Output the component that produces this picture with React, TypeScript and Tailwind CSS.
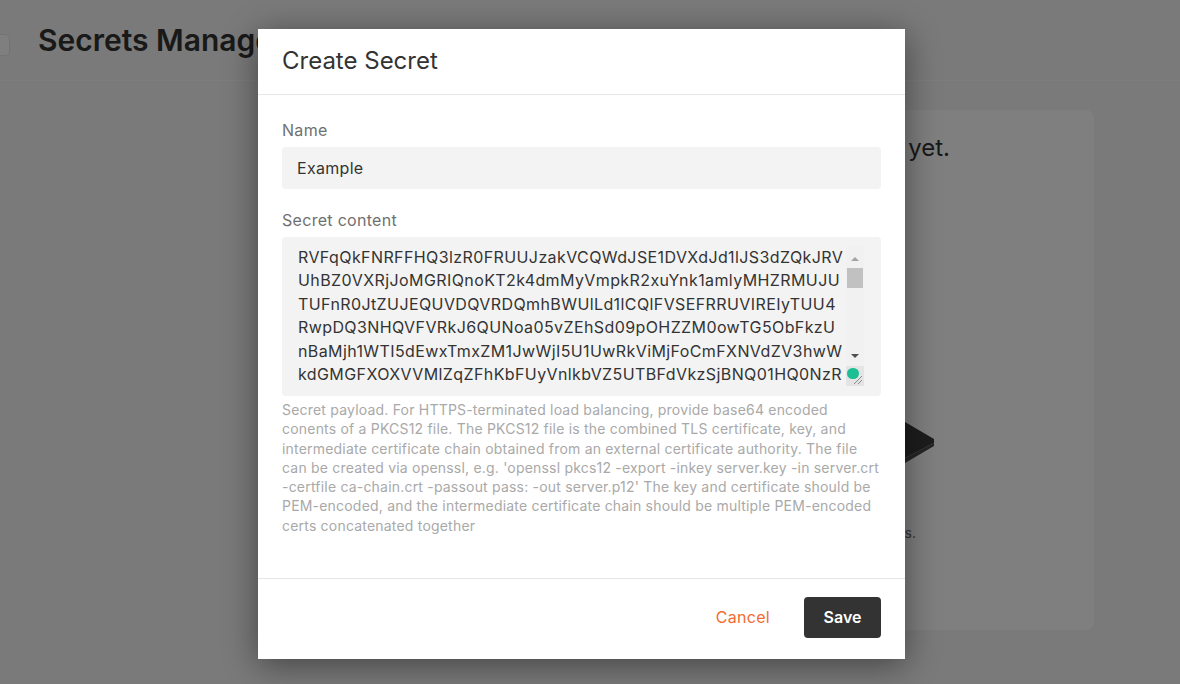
import React from "react";

const SECRET = [
  "RVFqQkFNRFFHQ3lzR0FRUUJzakVCQWdJSE1DVXdJd1lJS3dZQkJRV",
  "UhBZ0VXRjJoMGRIQnoKT2k4dmMyVmpkR2xuYnk1amlyMHZRMUJU",
  "TUFnR0JtZUJEQUVDQVRDQmhBWUlLd1lCQlFVSEFRRUVIREIyTUU4",
  "RwpDQ3NHQVFVRkJ6QUNoa05vZEhSd09pOHZZM0owTG5ObFkzU",
  "nBaMjh1WTI5dEwxTmxZM1JwWjI5U1UwRkViMjFoCmFXNVdZV3hwW",
  "kdGMGFXOXVVMlZqZFhKbFUyVnlkbVZ5UTBFdVkzSjBNQ01HQ0NzR",
  "QVFVRkJ6QUJoaGRvZEhSd09pOHZiMk56Y0M1elpXTjBhV2R2TG1O",
  "dmJUQWRCZ05WSFE0RUZnUVVvSnpTVWhoOXZFQW1aeTdMWUdTRmNR",
  "V1NnWUx5S2tGQUhMRGV5U2h2Z0F3RjVGTmpKREF0Q2xLbmVrVm13",
  "TUFrR0ExVWRFd1FDTUFBd0h3WURWUjBqQkJnd0ZvQVVqWUpUU3Bh",
  "aWJ1VDJvSDVlWkp0RFV3c0x2NXB3V0ZUUlpCR01FNEdBMVVkSUFS",
  "SE1FVXdPUVlMS3dZQkJBR3lNUUVDQWdjd0tqQW9CZ2dyQmdFRkJR",
  "Y0NBUlljYUhSMGNITTZMeTl6WldOMGFXZHZMbU52YlM5RFVGTXdD",
  "QVlHWjRFTUFRSUJNSUdFQmdnckJnRUZCUWNCQVFSNE1IWXdUd1lJ",
  "S3dZQkJRVUhNQUtHUTJoMGRIQTZMeTlqY25RdWMyVmpkR2xuYnk1",
  "amIyMHZVMlZqZEdsbmIxSlRRVVJ2YldGcGJsWmhiR2xrWVhScGIy",
  "NVRaV04xY21WVFpYSjJaWEpEUVM1amNuUXdJd1lJS3dZQkJRVUhN",
  "QUdHRjJoMGRIQTZMeTl2WTNOd0xuTmxZM1JwWjI4dVkyOXRNQ1VH",
  "QTFVZEVRUWVNQnlDRG1WNFlXMXdiR1V1WTI5dGdncDNkM2N1WlhoaA",
  "YlhCc1pTNWpiMjB3Z2dGL0Jnb3JCZ0VFQWRaNUFnUUNCSUlCYndT",
  "Q0FXc0JhUUIzQUVhbFZldDFGdC9ab2tTOGU1M0pxSTBjL2hZUlpQ",
  "VnlDREFrYXUyaTlzNEFBQUFBR1B1OHRsMEFBQVFEQUVnd1JnSWhB",
  "TkxGS0xmbk5CUVF2ZHRWMWJhT2tXZ2d6NjRhQXo4QmRPc0pvL3FL",
  "WktLSUFpRUF2c21NT1d5Wm1tWm1sZUxhdUNHK1UzaElOWWJ4WGhV",
  "S0lRS3J5dlRBWG1NPQotLS0tLUVORCBDRVJUSUZJQ0FURS0tLS0t",
].join("\n");

const HELP = [
  "Secret payload. For HTTPS-terminated load balancing, provide base64 encoded",
  "conents of a PKCS12 file. The PKCS12 file is the combined TLS certificate, key, and",
  "intermediate certificate chain obtained from an external certificate authority. The file",
  "can be created via openssl, e.g. 'openssl pkcs12 -export -inkey server.key -in server.crt",
  "-certfile ca-chain.crt -passout pass: -out server.p12' The key and certificate should be",
  "PEM-encoded, and the intermediate certificate chain should be multiple PEM-encoded",
  "certs concatenated together",
];

export default function App() {
  return (
    <div
      className="relative w-[1180px] h-[684px] overflow-hidden bg-[#f4f4f4]"
      style={{ fontFamily: "Inter, 'Noto Sans', sans-serif" }}
    >
      {/* Background page */}
      <div className="flex flex-col h-full">
        <div className="h-[81px] flex items-center border-b border-[#fafafa] shrink-0">
          <div className="w-[24px] h-[22px] -ml-[14px] mt-[10px] rounded-[5px] bg-white border border-[#e6e6e6]" />
          <h1 className="ml-[28px] text-[30px] font-semibold text-[#333] leading-[36px]">
            Secrets Manager
          </h1>
        </div>
        <div className="flex">
          <div className="ml-[300px] mr-[86px] mt-[29px] h-[520px] flex-1 bg-white rounded-[8px] flex flex-col">
            <div className="w-[650px] mt-[22px] h-[32px] text-right text-[24px] leading-[32px] text-[#333]">
              No secrets yet.
            </div>
            <div className="mt-[248px] h-[60px] w-[640px] flex justify-end">
              <svg width="120" height="60" viewBox="0 0 120 60">
                <polygon points="0,-20 85,10 114,27 114,31 85,46 0,60" fill="#3b3b3b" />
                <polygon points="85,46 114,31 114,34 85,51" fill="#4a4a4a" />
              </svg>
            </div>
            <div className="mt-[51px] w-[616px] text-right text-[14px] leading-[20px] text-[#666]">
              Create secrets.
            </div>
          </div>
        </div>
      </div>

      {/* Overlay */}
      <div className="absolute inset-0 bg-black/50 flex justify-center items-start pt-[29px] pr-[17px]">
        <div className="w-[647px] h-[630px] bg-white flex flex-col shadow-[0_6px_32px_rgba(0,0,0,0.45)]">
          {/* Header */}
          <div className="h-[66px] shrink-0 flex items-center px-6 border-b border-[#e6e6e6]">
            <h2 className="text-[24px] leading-[32px] text-[#333] font-normal -mt-[1px]">Create Secret</h2>
          </div>

          {/* Body */}
          <div className="h-[483px] shrink-0 px-6 pt-[23px] flex flex-col">
            <label className="text-[16px] leading-[24px] tracking-[0.3px] text-[#707070]">Name</label>
            <div className="mt-[5px] h-[42px] rounded-[4px] bg-[#f3f3f3] flex items-center px-[15px] text-[16px] tracking-[0.3px] text-[#333]">
              Example
            </div>
            <label className="mt-[19px] text-[16px] leading-[24px] tracking-[0.3px] text-[#707070]">
              Secret content
            </label>
            <div className="mt-[5px] h-[159px] rounded-[4px] bg-[#f3f3f3] pl-4 pr-[17px] pt-[9px] pb-[10px] flex">
              <textarea
                readOnly
                wrap="off"
                value={SECRET}
                className="block flex-1 min-w-0 h-[140px] bg-transparent outline-none resize-none text-[16px] leading-[23.4px] tracking-[0.4px] text-[#333] overflow-hidden"
                style={{ fontFamily: "Inter, 'Noto Sans', sans-serif" }}
              />
              {/* scrollbar */}
              <div className="w-[18px] h-[140px] shrink-0 flex flex-col bg-[#f1f1f1]">
                <div className="h-[20px] flex items-end justify-center pb-[5px]">
                  <div className="w-0 h-0 border-l-[4px] border-r-[4px] border-b-[4px] border-l-transparent border-r-transparent border-b-[#a3a3a3]" />
                </div>
                <div className="mt-[2px] mx-[1px] h-[20px] bg-[#c1c1c1]" />
                <div className="flex-1" />
                <div className="h-[14px] flex items-center justify-center">
                  <div className="w-0 h-0 border-l-[4px] border-r-[4px] border-t-[4px] border-l-transparent border-r-transparent border-t-[#505050]" />
                </div>
                <div className="relative mt-[3px] h-[20px] bg-[#e4e4e4]">
                  <svg className="absolute right-0 bottom-0" width="18" height="20" viewBox="0 0 18 20">
                    <line x1="8" y1="18" x2="16" y2="10" stroke="#8a8a8a" strokeWidth="1" />
                    <line x1="12" y1="18" x2="16" y2="14" stroke="#8a8a8a" strokeWidth="1" />
                  </svg>
                  <div className="absolute left-[1px] top-[2px] w-[12px] h-[11px] rounded-full bg-[#1bbf93]" />
                </div>
              </div>
            </div>
            <p className="mt-[4px] text-[14px] leading-[19.3px] tracking-[0.2px] text-[#a9a9a9] whitespace-nowrap">
              {HELP.map((l, i) => (
                <React.Fragment key={i}>
                  {l}
                  {i < HELP.length - 1 && <br />}
                </React.Fragment>
              ))}
            </p>
          </div>

          {/* Footer */}
          <div className="flex-1 border-t border-[#e6e6e6] flex items-center justify-end px-6 pb-[4px] gap-[18px]">
            <button className="px-4 h-[41px] text-[16px] tracking-[0.3px] text-[#f26b35]">Cancel</button>
            <button className="w-[77px] h-[41px] rounded-[4px] bg-[#333] text-white text-[16px] font-semibold">
              Save
            </button>
          </div>
        </div>
      </div>
    </div>
  );
}
